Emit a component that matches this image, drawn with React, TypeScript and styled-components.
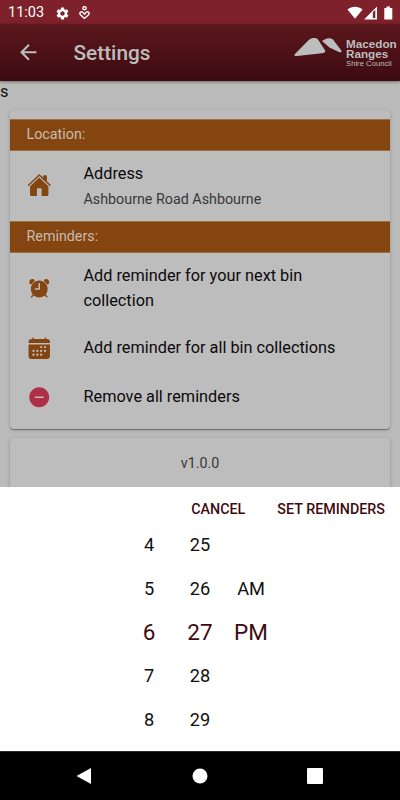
import React from "react";
import styled, { createGlobalStyle } from "styled-components";
import { IoAlarm, IoCalendar, IoHome, IoRemoveCircle } from "react-icons/io5";
import { MdArrowBack, MdSettings } from "react-icons/md";

const GlobalStyle = createGlobalStyle`
  * { box-sizing: border-box; }
  body { margin: 0; background: #bdbdbd; font-family: Roboto, sans-serif; }
`;

const Screen = styled.div`
  width: 400px;
  height: 800px;
  display: flex;
  flex-direction: column;
  overflow: hidden;
`;

const StatusBar = styled.div`
  flex: 0 0 24px;
  display: flex;
  align-items: center;
  justify-content: space-between;
  padding: 2px 7px 0 8px;
  background: #7e212a;
  color: #fff;
`;

const StatusGroup = styled.div<{ $gap: number }>`
  display: flex;
  align-items: center;
  gap: ${(p) => p.$gap}px;
  svg { display: block; }
`;

const Clock = styled.span`
  width: 36px;
  margin-right: 3px;
  font-size: 14.5px;
  line-height: 22px;
  white-space: nowrap;
`;

const Toolbar = styled.header`
  position: relative;
  z-index: 1;
  flex: 0 0 57px;
  display: flex;
  align-items: center;
  padding: 0 3px 0 16px;
  background: linear-gradient(#5c171e, #3c0b10);
  box-shadow: 0 1px 3px rgba(0, 0, 0, 0.45);
  color: #bdbdbd;
`;

const Title = styled.h1`
  flex: 1;
  margin: 0 0 0 33px;
  font-size: 20.8px;
  line-height: 26px;
  font-weight: 500;
`;

const Logo = styled.div`
  display: flex;
  gap: 4px;
  width: 103px;
  svg { flex: none; margin-top: 1px; }
`;

const LogoText = styled.div`
  display: flex;
  flex-direction: column;
  padding-top: 2px;
  font: 700 11.7px/10px "Liberation Sans", Arial, sans-serif;
  white-space: nowrap;
  small {
    font-size: 7.7px;
    font-weight: 400;
    line-height: 9px;
  }
`;

const Content = styled.main`
  flex: 0 0 406px;
  overflow: hidden;
  background: #bbbbbb;
`;

const StrayText = styled.div`
  height: 29px;
  font-size: 16.4px;
  line-height: 22px;
  color: #101010;
`;

const Card = styled.section<{ $top?: number }>`
  margin: 0 10px 9px;
  padding-top: ${(p) => p.$top ?? 0}px;
  border-radius: 4px;
  background: #bdbdbd;
  box-shadow: 0 1px 1px rgba(0, 0, 0, 0.38), 0 1px 4px rgba(0, 0, 0, 0.16);
`;

const SectionTitle = styled.h2`
  height: 32px;
  margin: 0;
  padding-left: 16.5px;
  border: solid #99703f;
  border-width: 1px 0;
  background: #844510;
  color: #c7bcb2;
  font-size: 14.3px;
  font-weight: 400;
  line-height: 29px;
`;

const Row = styled.div<{ $height: number }>`
  display: flex;
  align-items: center;
  height: ${(p) => p.$height}px;
  padding-left: 16.7px;
`;

const RowIcon = styled.div<{ $danger?: boolean }>`
  flex: 0 0 56.8px;
  display: flex;
  padding-bottom: 1px;
  color: ${(p) => (p.$danger ? "#ae2f46" : "#844510")};
`;

const Label = styled.div`
  width: 270px;
  color: #0b0b0b;
  font-size: 16.3px;
  line-height: 24.6px;
`;

const Address = styled.div`
  padding-top: 1px;
`;

const Detail = styled.div`
  color: #383838;
  font-size: 14.3px;
  line-height: 24px;
`;

const Version = styled.div`
  height: 60px;
  color: #383838;
  font-size: 14.3px;
  line-height: 51px;
  text-align: center;
`;

const Picker = styled.div`
  flex: 0 0 264px;
  overflow: hidden;
  background: #fff;
`;

const PickerActions = styled.div`
  display: flex;
  justify-content: flex-end;
  gap: 32px;
  height: 36px;
  padding: 0 15px;
`;

const Action = styled.button`
  padding: 0;
  border: 0;
  background: none;
  color: #3c0b10;
  font: 500 14.3px/44px Roboto, sans-serif;
  white-space: nowrap;
`;

const Wheels = styled.div`
  display: grid;
  grid-template-columns: 51px 51px 51px;
  grid-auto-rows: 43.8px;
  padding-left: 123.5px;
`;

const Option = styled.div<{ $selected?: boolean }>`
  color: ${(p) => (p.$selected ? "#3c0b10" : "#101010")};
  font-size: ${(p) => (p.$selected ? 22.5 : 18.2)}px;
  line-height: ${(p) => (p.$selected ? 43 : 44)}px;
  text-align: center;
`;

const NavBar = styled.nav`
  flex: 0 0 49px;
  display: flex;
  justify-content: space-between;
  align-items: center;
  padding: 0 76px;
  border-top: 1px solid #2a2a2a;
  background: #000;
`;

const times: string[][] = [
  ["4", "25", ""],
  ["5", "26", "AM"],
  ["6", "27", "PM"],
  ["7", "28", ""],
  ["8", "29", ""],
];

const HeartPerson = () => (
  <svg width="12" height="14" viewBox="0 0 12 14" fill="none" stroke="#fff" strokeWidth="1.4">
    <circle cx="6.5" cy="2.2" r="1.6" />
    <path d="M6.5 12.4 2.5 8.8C.9 6.8 3 5 4.7 6.3L6.5 8.2 8.3 6.3C10 5 12.1 6.8 10.5 8.8Z" />
  </svg>
);

export default function App() {
  return (
    <Screen>
      <GlobalStyle />
      <StatusBar>
        <StatusGroup $gap={8}>
          <Clock>11:03</Clock>
          <MdSettings size={15} />
          <HeartPerson />
        </StatusGroup>
        <StatusGroup $gap={0}>
          <svg width="46" height="14" viewBox="0 0 46 14" fill="#fff">
            <path d="M.5 3.5C5-.2 11-.2 15.5 3.5L8 12.8Z" />
            <path fillRule="evenodd" d="M30 .5V13.5H17ZM25.8 6.2V12H28.3V3.7Z" />
            <path d="M39.5 .5h3.4V2H45.3v11.5h-8V2H39.5Z" />
          </svg>
        </StatusGroup>
      </StatusBar>
      <Toolbar>
        <MdArrowBack size={24.5} />
        <Title>Settings</Title>
        <Logo>
          <svg width="48" height="18" viewBox="0 0 48 18" fill="#bdbdbd">
            <path d="M1.2 15.8 15 1.8C18-.9 21.5-.7 24 1.4L31 12.3C32 14 30.5 14.9 28 15.2L3 18C.2 18.1-.3 17.3 1.2 15.8Z" />
            <path d="M28 3.1C32-.4 36-.6 39 1.5L47.3 12.5C48.2 14 47 14.8 44.9 13.9L35.5 9.5Z" />
          </svg>
          <LogoText>
            <span>Macedon</span>
            <span>Ranges</span>
            <small>Shire Council</small>
          </LogoText>
        </Logo>
      </Toolbar>
      <Content>
        <StrayText>s</StrayText>
        <Card $top={9}>
          <SectionTitle>Location:</SectionTitle>
          <Row $height={70}>
            <RowIcon><IoHome size={24.5} /></RowIcon>
            <Address>
              <Label>Address</Label>
              <Detail>Ashbourne Road Ashbourne</Detail>
            </Address>
          </Row>
          <SectionTitle>Reminders:</SectionTitle>
          <Row $height={71}>
            <RowIcon><IoAlarm size={24.5} /></RowIcon>
            <Label>Add reminder for your next bin collection</Label>
          </Row>
          <Row $height={49}>
            <RowIcon><IoCalendar size={24.5} /></RowIcon>
            <Label>Add reminder for all bin collections</Label>
          </Row>
          <Row $height={49}>
            <RowIcon $danger><IoRemoveCircle size={24.5} /></RowIcon>
            <Label>Remove all reminders</Label>
          </Row>
          <Row $height={7} />
        </Card>
        <Card>
          <Version>v1.0.0</Version>
        </Card>
      </Content>
      <Picker>
        <PickerActions>
          <Action>CANCEL</Action>
          <Action>SET REMINDERS</Action>
        </PickerActions>
        <Wheels>
          {times.map((row, r) =>
            row.map((value, c) => (
              <Option key={`${r}-${c}`} $selected={r === 2}>{value}</Option>
            ))
          )}
        </Wheels>
      </Picker>
      <NavBar>
        <svg width="16" height="18" viewBox="0 0 16 18"><path d="M.5 9 15 1v16Z" fill="#fff" /></svg>
        <svg width="18" height="16" viewBox="0 0 18 16"><circle cx="10" cy="8" r="7.5" fill="#fff" /></svg>
        <svg width="18" height="16" viewBox="0 0 18 16"><rect x="1" width="16" height="16" rx="1" fill="#fff" /></svg>
      </NavBar>
    </Screen>
  );
}
